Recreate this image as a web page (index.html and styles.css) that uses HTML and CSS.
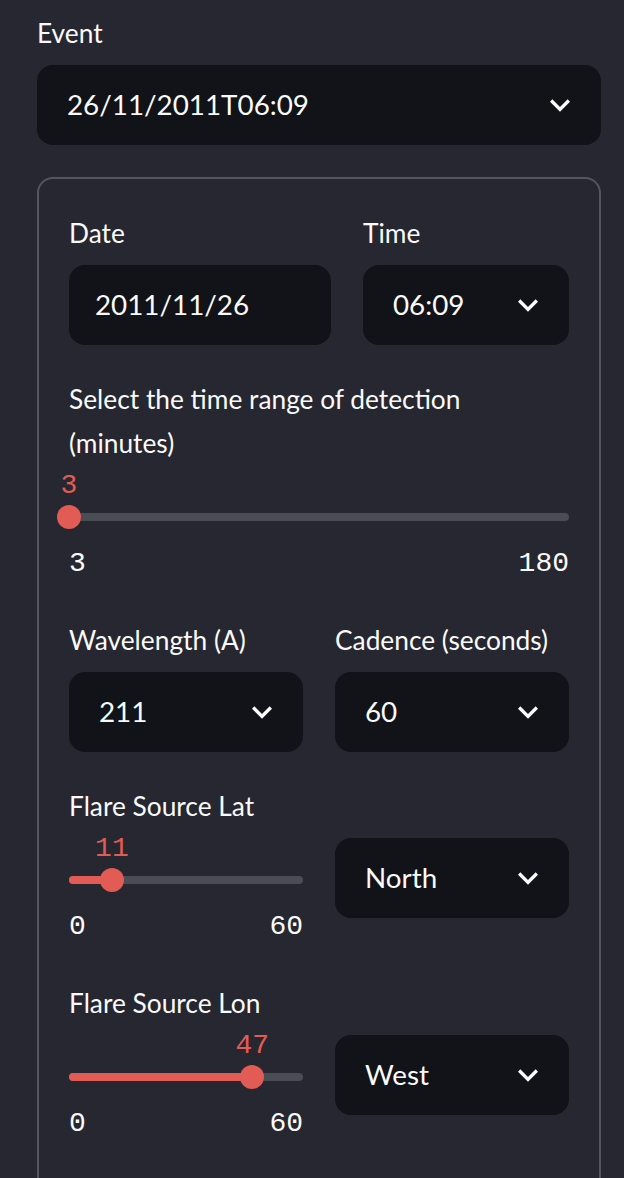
FILE: index.html
```html
<!DOCTYPE html>
<html lang="en">
<head>
<meta charset="utf-8">
<title>Event selection</title>
<link rel="stylesheet" href="styles.css">
</head>
<body>
<main class="sidebar">
  <div class="field">
    <label class="label">Event</label>
    <div class="select">
      <span class="value">26/11/2011T06:09</span>
      <svg class="chev" viewBox="0 0 24 24"><path d="M16.59 8.59L12 13.17 7.41 8.59 6 10l6 6 6-6z"/></svg>
    </div>
  </div>

  <section class="box">
    <div class="cols cols-date">
      <div class="field">
        <label class="label">Date</label>
        <div class="input"><span class="value">2011/11/26</span></div>
      </div>
      <div class="field">
        <label class="label">Time</label>
        <div class="select">
          <span class="value">06:09</span>
          <svg class="chev" viewBox="0 0 24 24"><path d="M16.59 8.59L12 13.17 7.41 8.59 6 10l6 6 6-6z"/></svg>
        </div>
      </div>
    </div>

    <div class="field">
      <label class="label">Select the time range of detection (minutes)</label>
      <div class="slider">
        <div class="track-area">
          <div class="track"><div class="fill" style="width:0%"></div></div>
          <div class="thumb" style="left:0%"><span class="thumb-value">3</span></div>
        </div>
        <div class="ticks"><span>3</span><span>180</span></div>
      </div>
    </div>

    <div class="cols">
      <div class="field">
        <label class="label">Wavelength (A)</label>
        <div class="select">
          <span class="value">211</span>
          <svg class="chev" viewBox="0 0 24 24"><path d="M16.59 8.59L12 13.17 7.41 8.59 6 10l6 6 6-6z"/></svg>
        </div>
      </div>
      <div class="field">
        <label class="label">Cadence (seconds)</label>
        <div class="select">
          <span class="value">60</span>
          <svg class="chev" viewBox="0 0 24 24"><path d="M16.59 8.59L12 13.17 7.41 8.59 6 10l6 6 6-6z"/></svg>
        </div>
      </div>
    </div>

    <div class="cols">
      <div class="field">
        <label class="label">Flare Source Lat</label>
        <div class="slider">
          <div class="track-area">
            <div class="track"><div class="fill" style="width:18.333%"></div></div>
            <div class="thumb" style="left:18.333%"><span class="thumb-value">11</span></div>
          </div>
          <div class="ticks"><span>0</span><span>60</span></div>
        </div>
      </div>
      <div class="field">
        <label class="label hidden">Flare Source Lat direction</label>
        <div class="select">
          <span class="value">North</span>
          <svg class="chev" viewBox="0 0 24 24"><path d="M16.59 8.59L12 13.17 7.41 8.59 6 10l6 6 6-6z"/></svg>
        </div>
      </div>
    </div>

    <div class="cols">
      <div class="field">
        <label class="label">Flare Source Lon</label>
        <div class="slider">
          <div class="track-area">
            <div class="track"><div class="fill" style="width:78.333%"></div></div>
            <div class="thumb" style="left:78.333%"><span class="thumb-value">47</span></div>
          </div>
          <div class="ticks"><span>0</span><span>60</span></div>
        </div>
      </div>
      <div class="field">
        <label class="label hidden">Flare Source Lon direction</label>
        <div class="select">
          <span class="value">West</span>
          <svg class="chev" viewBox="0 0 24 24"><path d="M16.59 8.59L12 13.17 7.41 8.59 6 10l6 6 6-6z"/></svg>
        </div>
      </div>
    </div>
  </section>
</main>
</body>
</html>
```

FILE: styles.css
```css
* { box-sizing: border-box; }

html, body {
  margin: 0;
  padding: 0;
  background: #262730;
}

body {
  font-family: Lato, "Open Sans", "Noto Sans", sans-serif;
  color: #fafafa;
  overflow: hidden;
}

.sidebar {
  display: flex;
  flex-direction: column;
  gap: 32px;
  padding: 11px 23px 0 37px;
}

.field {
  display: flex;
  flex-direction: column;
  min-width: 0;
}

.label {
  font-size: 26.3px;
  line-height: 44.8px;
  margin-bottom: 9px;
  color: #fafafa;
}

.label.hidden {
  visibility: hidden;
  white-space: nowrap;
  overflow: hidden;
}

.select,
.input {
  height: 80px;
  background: #111318;
  border-radius: 16px;
  display: flex;
  align-items: center;
  justify-content: space-between;
  padding: 0 21px 0 30px;
  font-size: 27.8px;
  color: #fafafa;
}

.input {
  padding-left: 26px;
}

.chev {
  width: 40px;
  height: 40px;
  fill: #fafafa;
  flex: none;
}

.box {
  border: 2px solid #55565d;
  border-radius: 16px;
  padding: 32px 30px 80px;
  display: flex;
  flex-direction: column;
  gap: 32px;
}

.cols {
  display: grid;
  grid-template-columns: 1fr 1fr;
  gap: 32px;
}

.cols-date {
  grid-template-columns: 262fr 206fr;
}

.slider {
  height: 111px;
}

.track-area {
  position: relative;
  margin-top: 30px;
  height: 24px;
  display: flex;
  align-items: center;
}

.track {
  width: 100%;
  height: 8px;
  border-radius: 4px;
  background: #4a4c56;
  overflow: hidden;
}

.fill {
  height: 100%;
  background: #e35b55;
}

.thumb {
  position: absolute;
  top: 0;
  width: 24px;
  height: 24px;
  margin-left: -12px;
  border-radius: 50%;
  background: #e35b55;
}

.thumb-value {
  position: absolute;
  left: 50%;
  bottom: calc(100% + 5px);
  transform: translateX(-50%);
  font-family: "Liberation Mono", "DejaVu Sans Mono", monospace;
  font-size: 28px;
  line-height: 28px;
  color: #e35b55;
  white-space: nowrap;
}

.ticks {
  margin-top: 15px;
  display: flex;
  justify-content: space-between;
  font-family: "Liberation Mono", "DejaVu Sans Mono", monospace;
  font-size: 28px;
  line-height: 40px;
  color: #fafafa;
}
```
